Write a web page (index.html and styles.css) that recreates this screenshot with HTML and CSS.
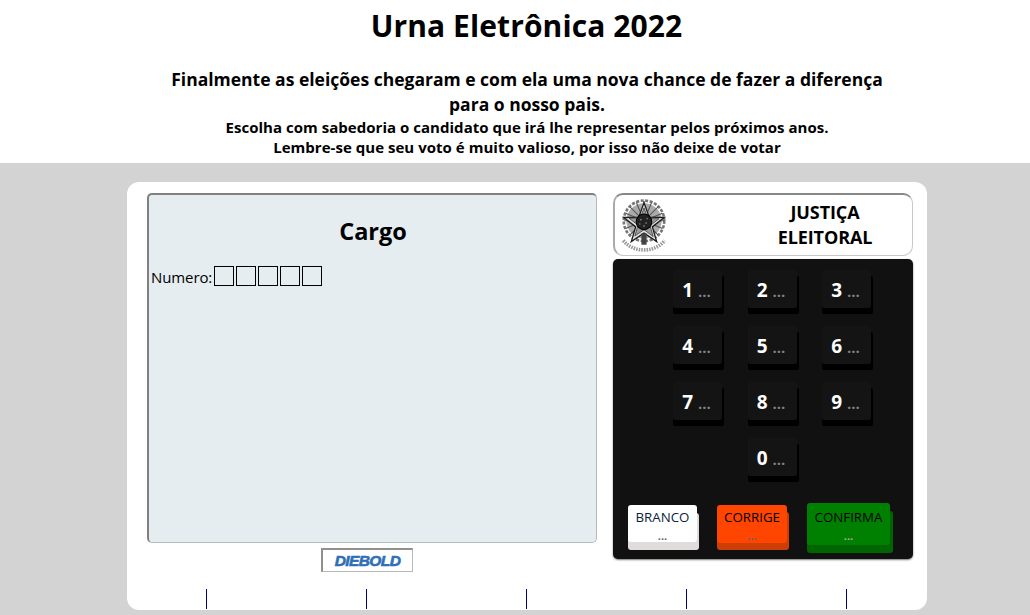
FILE: index.html
```html
<!DOCTYPE html>
<html lang="pt-BR">
<head>
<meta charset="utf-8">
<title>Urna Eletrônica 2022</title>
<link rel="stylesheet" href="styles.css">
</head>
<body>
<header class="intro">
  <h1>Urna Eletrônica 2022</h1>
  <h2>Finalmente as eleições chegaram e com ela uma nova chance de fazer a diferença para o nosso pais.</h2>
  <h3>Escolha com sabedoria o candidato que irá lhe representar pelos próximos anos.<br>Lembre-se que seu voto é muito valioso, por isso não deixe de votar</h3>
</header>
<main class="stage">
  <section class="urna">
    <div class="urna-top">
      <div class="left">
        <div class="screen">
          <div class="cargo">Cargo</div>
          <div class="numero"><span class="numero-label">Numero:</span><span class="digit"></span><span class="digit"></span><span class="digit"></span><span class="digit"></span><span class="digit"></span></div>
        </div>
        <div class="brand"><span class="brand-name">DIEBOLD</span></div>
      </div>
      <div class="right">
        <div class="justica">
          <svg class="emblem" viewBox="3 1 44 51" aria-hidden="true">
            <circle cx="25" cy="22" r="19.5" fill="none" stroke="#777" stroke-width="2.5" stroke-dasharray="3 1.4"/>
            <circle cx="25" cy="22" r="17" fill="#aaa"/>
            <g stroke="#555" stroke-width="1"><path d="M25 3v38M6 22h38M11.5 8.5l27 27M38.500 8.500l-27 27M17.700 4.300l14.600 35.400M32.300 4.300L17.700 39.700M7.300 14.700l35.400 14.600M42.700 14.700L7.300 29.300"/></g>
            <path d="M25 4.500l5 14 14.500.3-11.500 9 4.200 14.200L25 33.700 12.800 42 17 27.800l-11.500-9L20 18.500z" fill="#e4e4e4" stroke="#1c1c1c" stroke-width="1.300"/>
            <path d="M25 9.500l3.600 10.300 10.800.2-8.600 6.700 3.100 10.500L25 30.500l-8.900 6.200 3.100-10.500-8.600-6.700 10.800-.2z" fill="#9a9a9a" stroke="#333" stroke-width=".7"/>
            <circle cx="25" cy="23" r="7.500" fill="#222" stroke="#000"/>
            <g fill="#aaa"><circle cx="22" cy="21" r=".7"/><circle cx="27" cy="24" r=".7"/><circle cx="25" cy="27" r=".7"/><circle cx="28" cy="20" r=".6"/><circle cx="21" cy="25" r=".6"/></g>
            <path d="M22.500 34h5v11h-5z" fill="#444"/>
            <path d="M5 41q8 9 20 9t20-9" fill="none" stroke="#999" stroke-width="3.500" stroke-dasharray="1.500 1"/>
          </svg>
          <div class="justica-text">JUSTIÇA<br>ELEITORAL</div>
        </div>
        <div class="keypad">
          <div class="keys">
            <button class="key">1 <span class="dots">...</span></button>
            <button class="key">2 <span class="dots">...</span></button>
            <button class="key">3 <span class="dots">...</span></button>
            <button class="key">4 <span class="dots">...</span></button>
            <button class="key">5 <span class="dots">...</span></button>
            <button class="key">6 <span class="dots">...</span></button>
            <button class="key">7 <span class="dots">...</span></button>
            <button class="key">8 <span class="dots">...</span></button>
            <button class="key">9 <span class="dots">...</span></button>
            <button class="key key-zero">0 <span class="dots">...</span></button>
          </div>
          <div class="actions">
            <button class="action branco">BRANCO<span class="action-dots">...</span></button>
            <button class="action corrige">CORRIGE<span class="action-dots">...</span></button>
            <button class="action confirma">CONFIRMA<span class="action-dots">...</span></button>
          </div>
        </div>
      </div>
    </div>
    <div class="ticks"><span class="tick"></span><span class="tick"></span><span class="tick"></span><span class="tick"></span><span class="tick"></span></div>
  </section>
</main>
</body>
</html>
```

FILE: styles.css
```css
* { box-sizing: border-box; }
html, body { margin: 0; height: 100%; overflow: hidden; }
body {
  background: #fff;
  color: #000;
  font-family: "Open Sans", "Noto Sans", sans-serif;
  display: flex;
  flex-direction: column;
}
.intro {
  width: 800px;
  margin-left: 127px;
  height: 163px;
  text-align: center;
  flex: none;
}
.intro h1 {
  margin: 0;
  padding: 5px 1px 0 0;
  font-size: 30px;
  line-height: 42px;
  font-weight: 700;
  letter-spacing: 0.1px;
}
.intro h2 {
  width: 720px;
  margin: 0 auto;
  padding-top: 20px;
  font-size: 17.5px;
  line-height: 25px;
  font-weight: 700;
}
.intro h3 {
  margin: 0;
  font-size: 15px;
  line-height: 20px;
  font-weight: 700;
  letter-spacing: 0.03px;
}
.stage {
  flex: 1;
  background: #d3d3d3;
  padding: 19px 0 0 127px;
}
.urna {
  width: 800px;
  height: 428px;
  background: #fff;
  border-radius: 12px;
  display: flex;
  flex-direction: column;
}
.urna-top {
  display: flex;
  padding: 11px 14px 0 20px;
  gap: 16px;
  height: 407px;
}
.left { width: 450px; display: flex; flex-direction: column; align-items: flex-start; }
.screen {
  width: 450px;
  height: 350px;
  background: #e5edf0;
  border: 1px solid #b4bcbc;
  border-top: 2px solid #808080;
  border-left: 2px solid #808080;
  border-radius: 5px;
}
.cargo {
  text-align: center;
  font-size: 23.5px;
  font-weight: 700;
  line-height: 30px;
  padding: 21px 0 0 1px;
}
.numero {
  display: flex;
  align-items: center;
  gap: 2px;
  margin-top: 19px;
  padding-left: 2px;
  height: 22px;
}
.numero-label { font-size: 15px; line-height: 20px; margin-top: 2px; letter-spacing: -0.1px; }
.digit {
  width: 20px;
  height: 20px;
  border: 1px solid #000;
}
.brand {
  margin: 5px 0 0 174px;
  width: 92px;
  height: 24px;
  border: 1px solid #b8b8b8;
  border-top: 2px solid #909090;
  border-left: 2px solid #909090;
  display: flex;
  align-items: center;
  justify-content: center;
}
.brand-name {
  color: #2f6fb8;
  font-family: "Liberation Sans", sans-serif;
  font-size: 15.5px;
  font-weight: 700;
  font-style: italic;
  letter-spacing: -0.6px;
  -webkit-text-stroke: 0.6px #2f6fb8;
}
.right { width: 300px; }
.justica {
  height: 63px;
  border: 1px solid #c8c8c8;
  border-top: 2px solid #888;
  border-left: 2px solid #aaa;
  border-radius: 10px;
  display: flex;
  align-items: center;
  padding-left: 6px;
}
.emblem { width: 46px; height: 53px; flex: none; filter: blur(0.35px); }
.justica-text {
  width: 130px;
  margin-left: 93px;
  text-align: center;
  font-size: 18px;
  font-weight: 700;
  line-height: 25px;
  letter-spacing: -0.1px;
}
.keypad {
  margin-top: 3px;
  height: 300px;
  background: #111;
  border-radius: 5px;
  box-shadow: 0 1px 2px #777;
  padding: 11px 0 0;
}
.keys {
  display: grid;
  grid-template-columns: repeat(3, 49px);
  grid-auto-rows: 38px;
  column-gap: 25.5px;
  row-gap: 18px;
  margin-left: 60px;
}
.key {
  width: 49px;
  height: 38px;
  padding: 2px 2px 0 0;
  border: 0;
  background: #141414;
  color: #fff;
  border-radius: 2px;
  font-family: inherit;
  font-size: 19px;
  font-weight: 700;
  box-shadow: 0 6px 0 #000, 2px 6px 0 #000;
  text-align: center;
  white-space: nowrap;
}
.key-zero { grid-column: 2; }
.dots { color: #808080; font-size: 15px; font-weight: 700; }
.actions {
  display: flex;
  margin-top: 27px;
  margin-left: 15px;
  align-items: flex-start;
}
.action {
  display: flex;
  flex-direction: column;
  align-items: center;
  border: 0;
  padding: 4px 0 0;
  font-family: inherit;
  font-size: 13.3px;
  line-height: 17px;
  border-radius: 3px;
  color: #000;
  margin-top: 2px;
}
.action-dots { font-weight: 700; font-size: 11px; line-height: 14px; margin-top: 3px; color: #666; }
.branco { width: 69px; height: 37px; background: #fff; color: #0a2440; box-shadow: 0 8px 0 #e0dcdc, 2px 8px 0 #e0dcdc; }
.corrige { width: 70px; height: 38px; margin-left: 20px; background: #ff4500; box-shadow: 0 7px 0 #cc3e05, 2px 7px 0 #cc3e05; }
.confirma { width: 83px; height: 42px; margin-left: 20px; margin-top: 0; padding-top: 6px; background: #008000; box-shadow: 0 8px 0 #006400, 3px 8px 0 #006400; }
.confirma .action-dots { color: #aaa; }
.ticks {
  display: flex;
  margin-top: 0;
}
.tick {
  flex: 0 0 160px;
  height: 20px;
  display: block;
  background: linear-gradient(#000080, #000080) no-repeat 79px 0 / 1px 20px;
}
```
